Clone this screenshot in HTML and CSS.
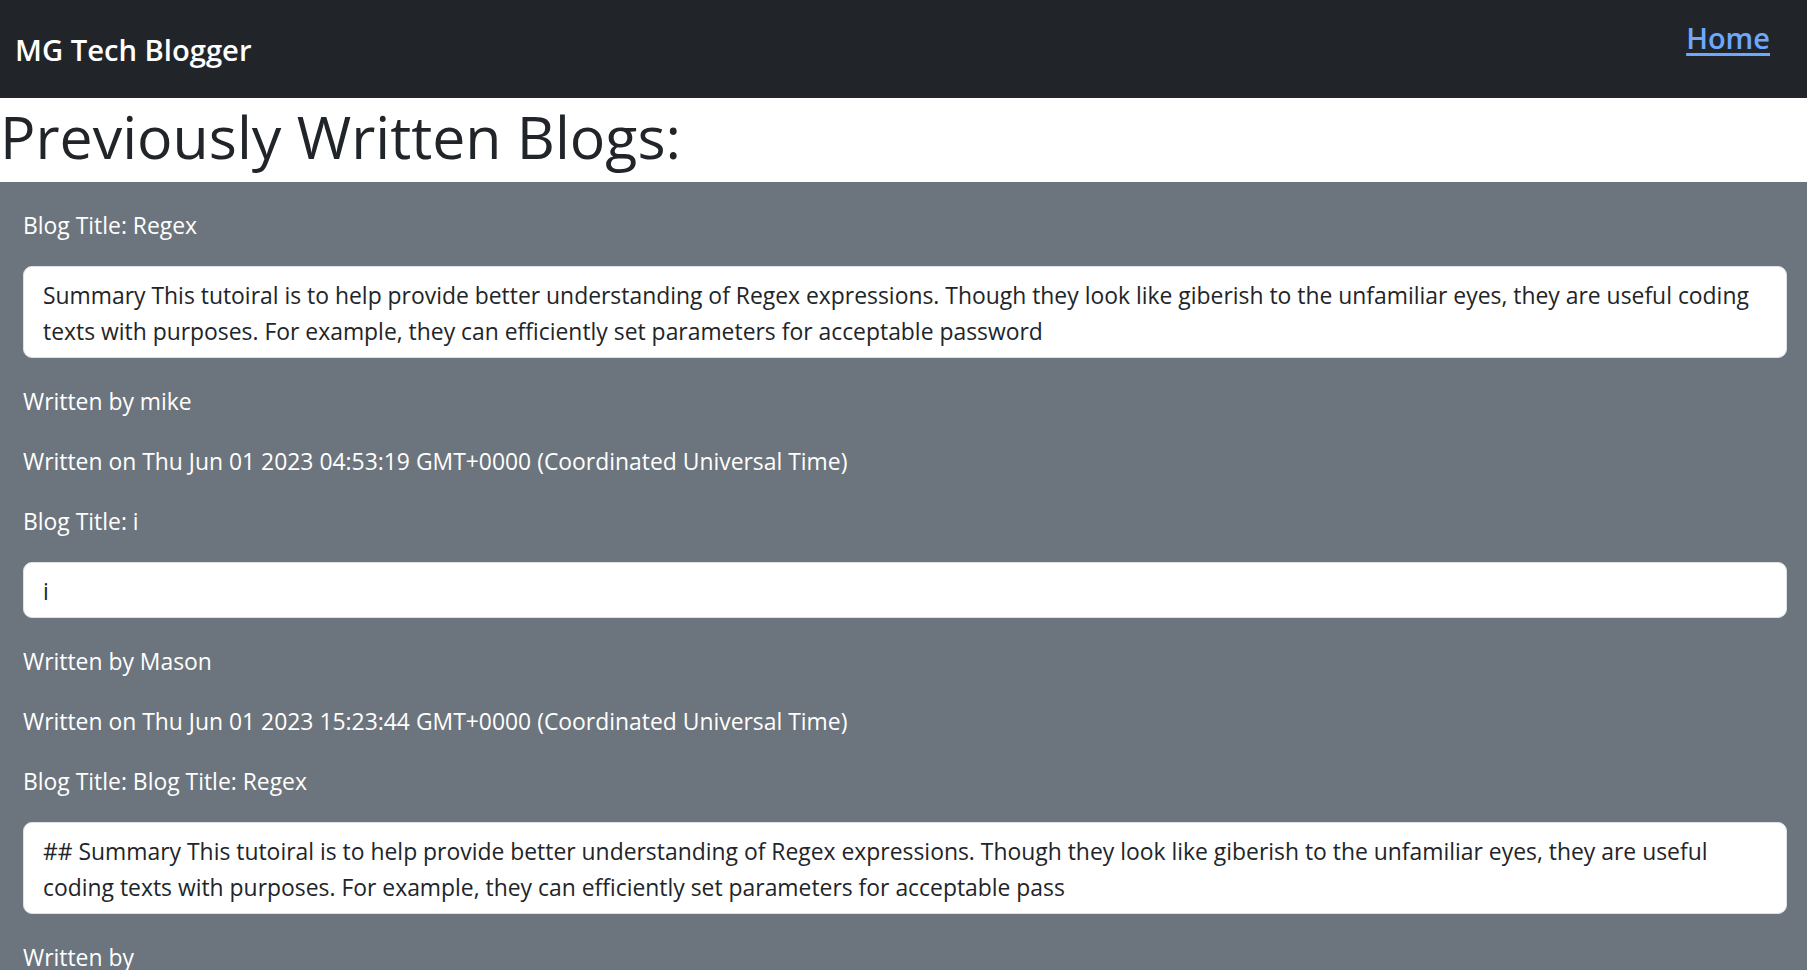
FILE: index.html
```html
<!DOCTYPE html>
<html lang="en">
<head>
<meta charset="utf-8">
<title>MG Tech Blogger</title>
<link rel="stylesheet" href="styles.css">
</head>
<body>
<header class="navbar">
  <a class="brand" href="#">MG Tech Blogger</a>
  <nav class="nav"><a class="nav-link" href="#">Home</a></nav>
</header>
<h1 class="page-title">Previously Written Blogs:</h1>
<main class="blogs">
  <article class="post">
    <p class="line title">Blog Title: Regex</p>
    <div class="content">Summary This tutoiral is to help provide better understanding of Regex expressions. Though they look like giberish to the unfamiliar eyes, they are useful coding texts with purposes. For example, they can efficiently set parameters for acceptable password</div>
    <p class="line">Written by mike</p>
    <p class="line">Written on Thu Jun 01 2023 04:53:19 GMT+0000 (Coordinated Universal Time)</p>
  </article>
  <article class="post">
    <p class="line title">Blog Title: i</p>
    <div class="content">i</div>
    <p class="line">Written by Mason</p>
    <p class="line">Written on Thu Jun 01 2023 15:23:44 GMT+0000 (Coordinated Universal Time)</p>
  </article>
  <article class="post">
    <p class="line title">Blog Title: Blog Title: Regex</p>
    <div class="content">## Summary This tutoiral is to help provide better understanding of Regex expressions. Though they look like giberish to the unfamiliar eyes, they are useful coding texts with purposes. For example, they can efficiently set parameters for acceptable pass</div>
    <p class="line">Written by</p>
    <p class="line">Written on Thu Jun 01 2023 15:23:44 GMT+0000 (Coordinated Universal Time)</p>
  </article>
</main>
</body>
</html>
```
FILE: styles.css
```css
html, body {
  margin: 0;
  padding: 0;
}
body {
  font-family: "Open Sans", "Noto Sans", sans-serif;
  font-size: 22.9px;
  line-height: 36px;
  color: #212529;
  background: #fff;
}
.navbar {
  height: 98px;
  background: #212529;
  display: flex;
  justify-content: space-between;
  align-items: flex-start;
  padding: 0 37px 0 15px;
  box-sizing: border-box;
}
.brand {
  color: #fff;
  text-decoration: none;
  font-size: 29.2px;
  font-weight: 600;
  line-height: 45px;
  margin-top: 28px;
}
.nav-link {
  display: block;
  color: #6ea8fe;
  text-decoration: underline;
  text-underline-offset: 4px;
  text-decoration-thickness: 3px;
  font-size: 29px;
  font-weight: 600;
  line-height: 45px;
  margin-top: 15px;
}
.page-title {
  margin: 0;
  height: 84px;
  font-size: 59px;
  font-weight: 500;
  line-height: 72px;
  padding: 2px 0 0;
  box-sizing: border-box;
}
.blogs {
  background: #6c757d;
  color: #fff;
  padding: 26px 20px 1px 23px;
}
.line {
  margin: 0 0 24px;
}
.line.title {
  margin-bottom: 22px;
}
.content {
  background: #fff;
  color: #212529;
  border: 1px solid #dee2e6;
  border-radius: 9px;
  padding: 11px 19px 7px;
  margin: 0 0 26px;
}
```
